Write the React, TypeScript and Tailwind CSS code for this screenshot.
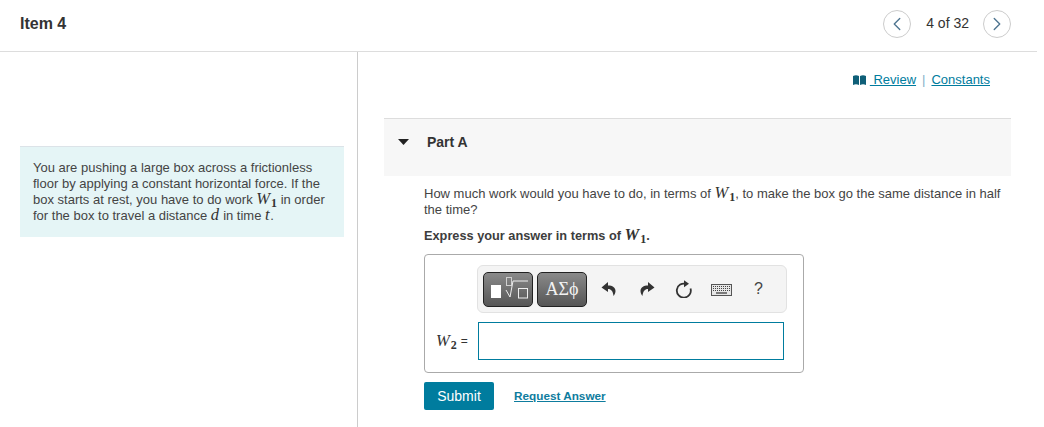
import { ChevronLeft, ChevronRight } from "lucide-react";

const Var = ({ name, sub }: { name: string; sub?: string }) => (
  <span className="font-['Liberation_Serif',serif] text-[16.500px] leading-[0] text-[#333333]">
    <i className="tracking-[0.5px]">{name}</i>
    {sub && <span className="text-[12px] relative top-[3px] font-bold ml-[0.5px]">{sub}</span>}
  </span>
);

const NavButton = ({ children }: { children: React.ReactNode }) => (
  <button className="w-[28px] h-[28px] rounded-full border border-[#cccccc] bg-white flex items-center justify-center text-[#4f7590]">
    {children}
  </button>
);

const Toolbar = () => (
  <div className="ml-[52px] w-[310px] h-[48px] rounded-[6px] border border-[#e2e2e2] bg-[#f4f4f4] flex items-center pl-[5px]">
    <div className="w-[50px] h-[35px] rounded-[5px] border border-[#222222] bg-gradient-to-b from-[#8a8a8a] to-[#565656] flex items-center justify-center">
      <svg width="44" height="28" viewBox="0 0 44 28" fill="none">
        <rect x="5" y="10" width="10" height="13" fill="#ffffff" />
        <rect x="20.500" y="2.500" width="5" height="8" stroke="#cfcfcf" fill="none" />
        <path d="M20 15l4 7 3-16h15" stroke="#eeeeee" strokeWidth="1" fill="none" />
        <rect x="32.500" y="13.500" width="9" height="9.500" stroke="#eeeeee" fill="none" />
      </svg>
    </div>
    <div className="ml-[4px] w-[50px] h-[35px] rounded-[5px] border border-[#222222] bg-gradient-to-b from-[#8a8a8a] to-[#565656] flex items-center justify-center font-['Liberation_Serif',serif] text-[18px] text-[#f2f2f2]">
      ΑΣϕ
    </div>
    <svg className="ml-[14px]" width="15" height="16" viewBox="0 0 15 16">
      <path d="M7 1 0.500 6.500 7 11V8c3.300 0 4.800 2 5.600 7 1.200-1.500 1.900-3.300 1.900-5C14.500 6.500 11.500 4.500 7 4.500z" fill="#333333" />
    </svg>
    <svg className="ml-[24px]" width="15" height="16" viewBox="0 0 15 16">
      <path d="M8 1l6.500 5.500L8 11V8c-3.300 0-4.800 2-5.600 7C1.200 13.500 0.500 11.700 0.500 10 0.500 6.500 3.500 4.500 8 4.500z" fill="#333333" />
    </svg>
    <svg className="ml-[20px]" width="18" height="18" viewBox="0 0 18 18" fill="none">
      <path d="M11.200 4A7 7 0 1 0 15.500 8.500" stroke="#333333" strokeWidth="1.800" />
      <path d="M9 0.300 14 3.800 9 7.300z" fill="#333333" />
    </svg>
    <svg className="ml-[18px] mt-[2px]" width="21" height="12" viewBox="0 0 21 12" fill="none">
      <rect x="0.500" y="0.500" width="20" height="11" fill="#e6e6e6" stroke="#555555" />
      <path d="M2 2.500h17M2 4.500h17M2 6.500h17" stroke="#444444" strokeWidth="1" strokeDasharray="1 1" />
      <path d="M5 9h11" stroke="#555555" strokeWidth="1.500" />
    </svg>
    <span className="ml-[22px] font-['Liberation_Sans',sans-serif] text-[16px] text-[#444444]">?</span>
  </div>
);

export default function App() {
  return (
    <div className="w-[1044px] h-[427px] overflow-hidden bg-white font-['Liberation_Sans',Arial,sans-serif] text-[13px] text-[#3d3d3d]">
      <header className="w-[1037px] h-[52px] border-b border-[#dddddd] flex items-center justify-between pl-[20px] pr-[26px]">
        <h1 className="text-[16px] font-bold text-[#333333] -mt-[4px]">Item 4</h1>
        <div className="flex items-center gap-[14px] -mt-[4px]">
          <NavButton><ChevronLeft size={22} strokeWidth={1.500} /></NavButton>
          <span className="text-[14px] text-[#333333] ml-[1px]">4 of 32</span>
          <NavButton><ChevronRight size={22} strokeWidth={1.500} /></NavButton>
        </div>
      </header>

      <div className="flex h-[375px]">
        <aside className="w-[358px] shrink-0 border-r border-[#cccccc] pl-[20px] pr-[13px] pt-[94px]">
          <div className="h-[91px] border-t border-[#dce3e8] bg-[#e5f5f6] pl-[13px] pr-[10px] pt-[13px] leading-[16px] text-[#444444]">
            You are pushing a large box across a frictionless floor by applying a constant horizontal force. If the box starts at rest, you have to do work <Var name="W" sub="1" /> in order for the box to travel a distance <Var name="d" /> in time <Var name="t" />.
          </div>
        </aside>

        <main className="pl-[26px] w-[653px]">
          <div className="h-[66px] flex justify-end items-start pt-[20px] pr-[21px] text-[13px] text-[#007c9e] leading-[16px]">
            <svg className="mt-[3px]" width="13" height="10" viewBox="0 0 13 10">
              <path d="M0 1c2-1 4-1 6 0v9c-2-1-4-1-6 0zM7 1c2-1 4-1 6 0v9c-2-1-4-1-6 0z" fill="#0f5f78" />
            </svg>
            <a className="underline ml-[4px]">&nbsp;Review</a>
            <span className="text-[#7fb0c8] mx-[6px]">|</span>
            <a className="underline">Constants</a>
          </div>

          <div className="h-[58px] border-t border-[#dddddd] bg-[#f7f7f7] flex items-start pl-[14px] pt-[15px]">
            <svg className="mt-[5px]" width="11" height="6" viewBox="0 0 11 6"><path d="M0 0h11L5.500 6z" fill="#222222" /></svg>
            <h2 className="ml-[18px] text-[14px] font-bold text-[#333333] leading-[16px]">Part A</h2>
          </div>

          <div className="pl-[40px]">
            <p className="mt-[10px] leading-[16px] text-[#444444]">
              How much work would you have to do, in terms of <Var name="W" sub="1" />, to make the box go the same distance in half the time?
            </p>
            <p className="mt-[10px] text-[12.750px] font-bold text-[#3d3d3d] leading-[16px]">
              Express your answer in terms of <Var name="W" sub="1" />.
            </p>

            <div className="mt-[10px] w-[380px] h-[119px] border border-[#aaaaaa] rounded-[4px] pt-[10px]">
              <Toolbar />
              <div className="flex items-center mt-[9px] ml-[11px]">
                <span className="w-[42px] flex items-center gap-[4px] text-[#333333]">
                  <Var name="W" sub="2" /><span className="text-[12px]">=</span>
                </span>
                <div className="w-[306px] h-[38px] border border-[#007c9e] bg-white" />
              </div>
            </div>

            <div className="flex items-center mt-[9px]">
              <button className="w-[70px] h-[28px] rounded-[2px] bg-[#007c9e] text-white text-[14px]">Submit</button>
              <a className="ml-[20px] text-[11.750px] font-bold text-[#0e7c9e] underline">Request Answer</a>
            </div>
          </div>
        </main>
      </div>
    </div>
  );
}
